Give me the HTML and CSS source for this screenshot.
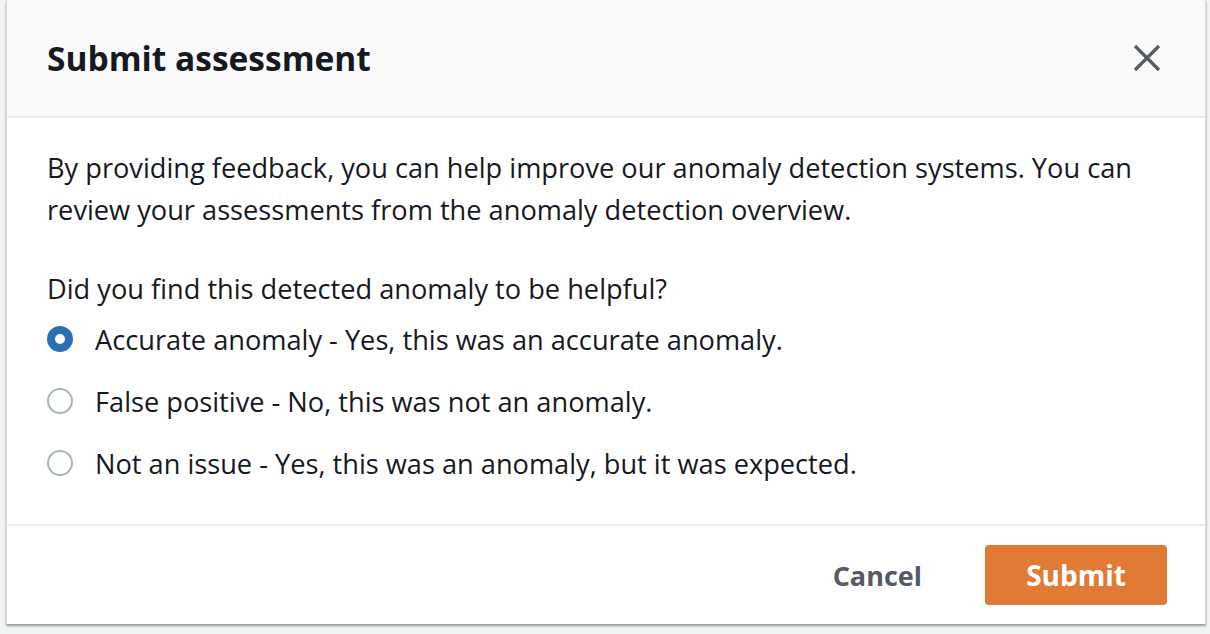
FILE: index.html
```html
<!DOCTYPE html>
<html>
<head>
<meta charset="utf-8">
<link rel="stylesheet" href="styles.css">
</head>
<body>
<div class="modal">
  <div class="header">
    <h2 class="title">Submit assessment</h2>
    <button class="close" aria-label="Close">
      <svg width="28" height="28" viewBox="0 0 28 28"><path d="M2 2 L26 26 M26 2 L2 26" stroke="#545b64" stroke-width="3.2" fill="none"/></svg>
    </button>
  </div>
  <div class="body">
    <p class="intro">By providing feedback, you can help improve our anomaly detection systems. You can review your assessments from the anomaly detection overview.</p>
    <div class="question">Did you find this detected anomaly to be helpful?</div>
    <div class="options">
      <label class="option"><span class="radio checked"></span><span>Accurate anomaly - Yes, this was an accurate anomaly.</span></label>
      <label class="option"><span class="radio"></span><span>False positive - No, this was not an anomaly.</span></label>
      <label class="option"><span class="radio"></span><span>Not an issue - Yes, this was an anomaly, but it was expected.</span></label>
    </div>
  </div>
  <div class="footer">
    <button class="btn-link">Cancel</button>
    <button class="btn-primary">Submit</button>
  </div>
</div>
</body>
</html>
```
FILE: styles.css
```css
html, body { margin: 0; padding: 0; }
body {
  background: #f2f3f3;
  font-family: "Open Sans", "Noto Sans", sans-serif;
  color: #16191f;
  width: 1210px;
  height: 634px;
  overflow: hidden;
}
.modal {
  margin-left: 6px;
  width: 1198px;
  height: 624px;
  background: #fff;
  border-left: 1px solid #d5dbdb;
  border-right: 1px solid #d5dbdb;
  box-shadow: 0 2px 2px rgba(0,28,36,0.4);
  display: flex;
  flex-direction: column;
}
.header {
  height: 116px;
  background: #fafafa;
  border-bottom: 2px solid #eaeded;
  display: flex;
  align-items: center;
  justify-content: space-between;
  padding: 0 44px 0 40px;
}
.title {
  margin: 0;
  font-size: 33.5px;
  font-weight: 700;
  color: #16191f;
}
.close {
  background: none;
  border: 0;
  padding: 0;
  width: 28px;
  height: 28px;
  display: flex;
}
.body {
  flex: 1;
  padding: 29px 40px 0 40px;
  border-bottom: 2px solid #eaeded;
}
.intro {
  margin: 0 0 37px 0;
  font-size: 27.2px;
  line-height: 42px;
}
.question {
  font-size: 27.2px;
  line-height: 42px;
}
.options {
  display: flex;
  flex-direction: column;
  margin-top: -2px;
}
.option {
  display: flex;
  align-items: center;
  gap: 22px;
  font-size: 27.2px;
  height: 62px;
}
.radio {
  width: 26px;
  height: 26px;
  border: 2.5px solid #aab7b8;
  border-radius: 50%;
  box-sizing: border-box;
  flex: none;
}
.radio.checked {
  border: 8px solid #2d6fb7;
  background: #fff;
}
.footer {
  height: 98px;
  display: flex;
  align-items: center;
  justify-content: flex-end;
  padding: 0 38px 0 0;
  gap: 63px;
}
.btn-link {
  background: none;
  border: 0;
  font-family: inherit;
  font-size: 27px;
  font-weight: 700;
  color: #545b64;
  padding: 0;
}
.btn-primary {
  background: #e07a34;
  border: 0;
  border-radius: 4px;
  color: #fff;
  font-family: inherit;
  font-size: 28px;
  font-weight: 700;
  width: 182px;
  height: 60px;
}
```
